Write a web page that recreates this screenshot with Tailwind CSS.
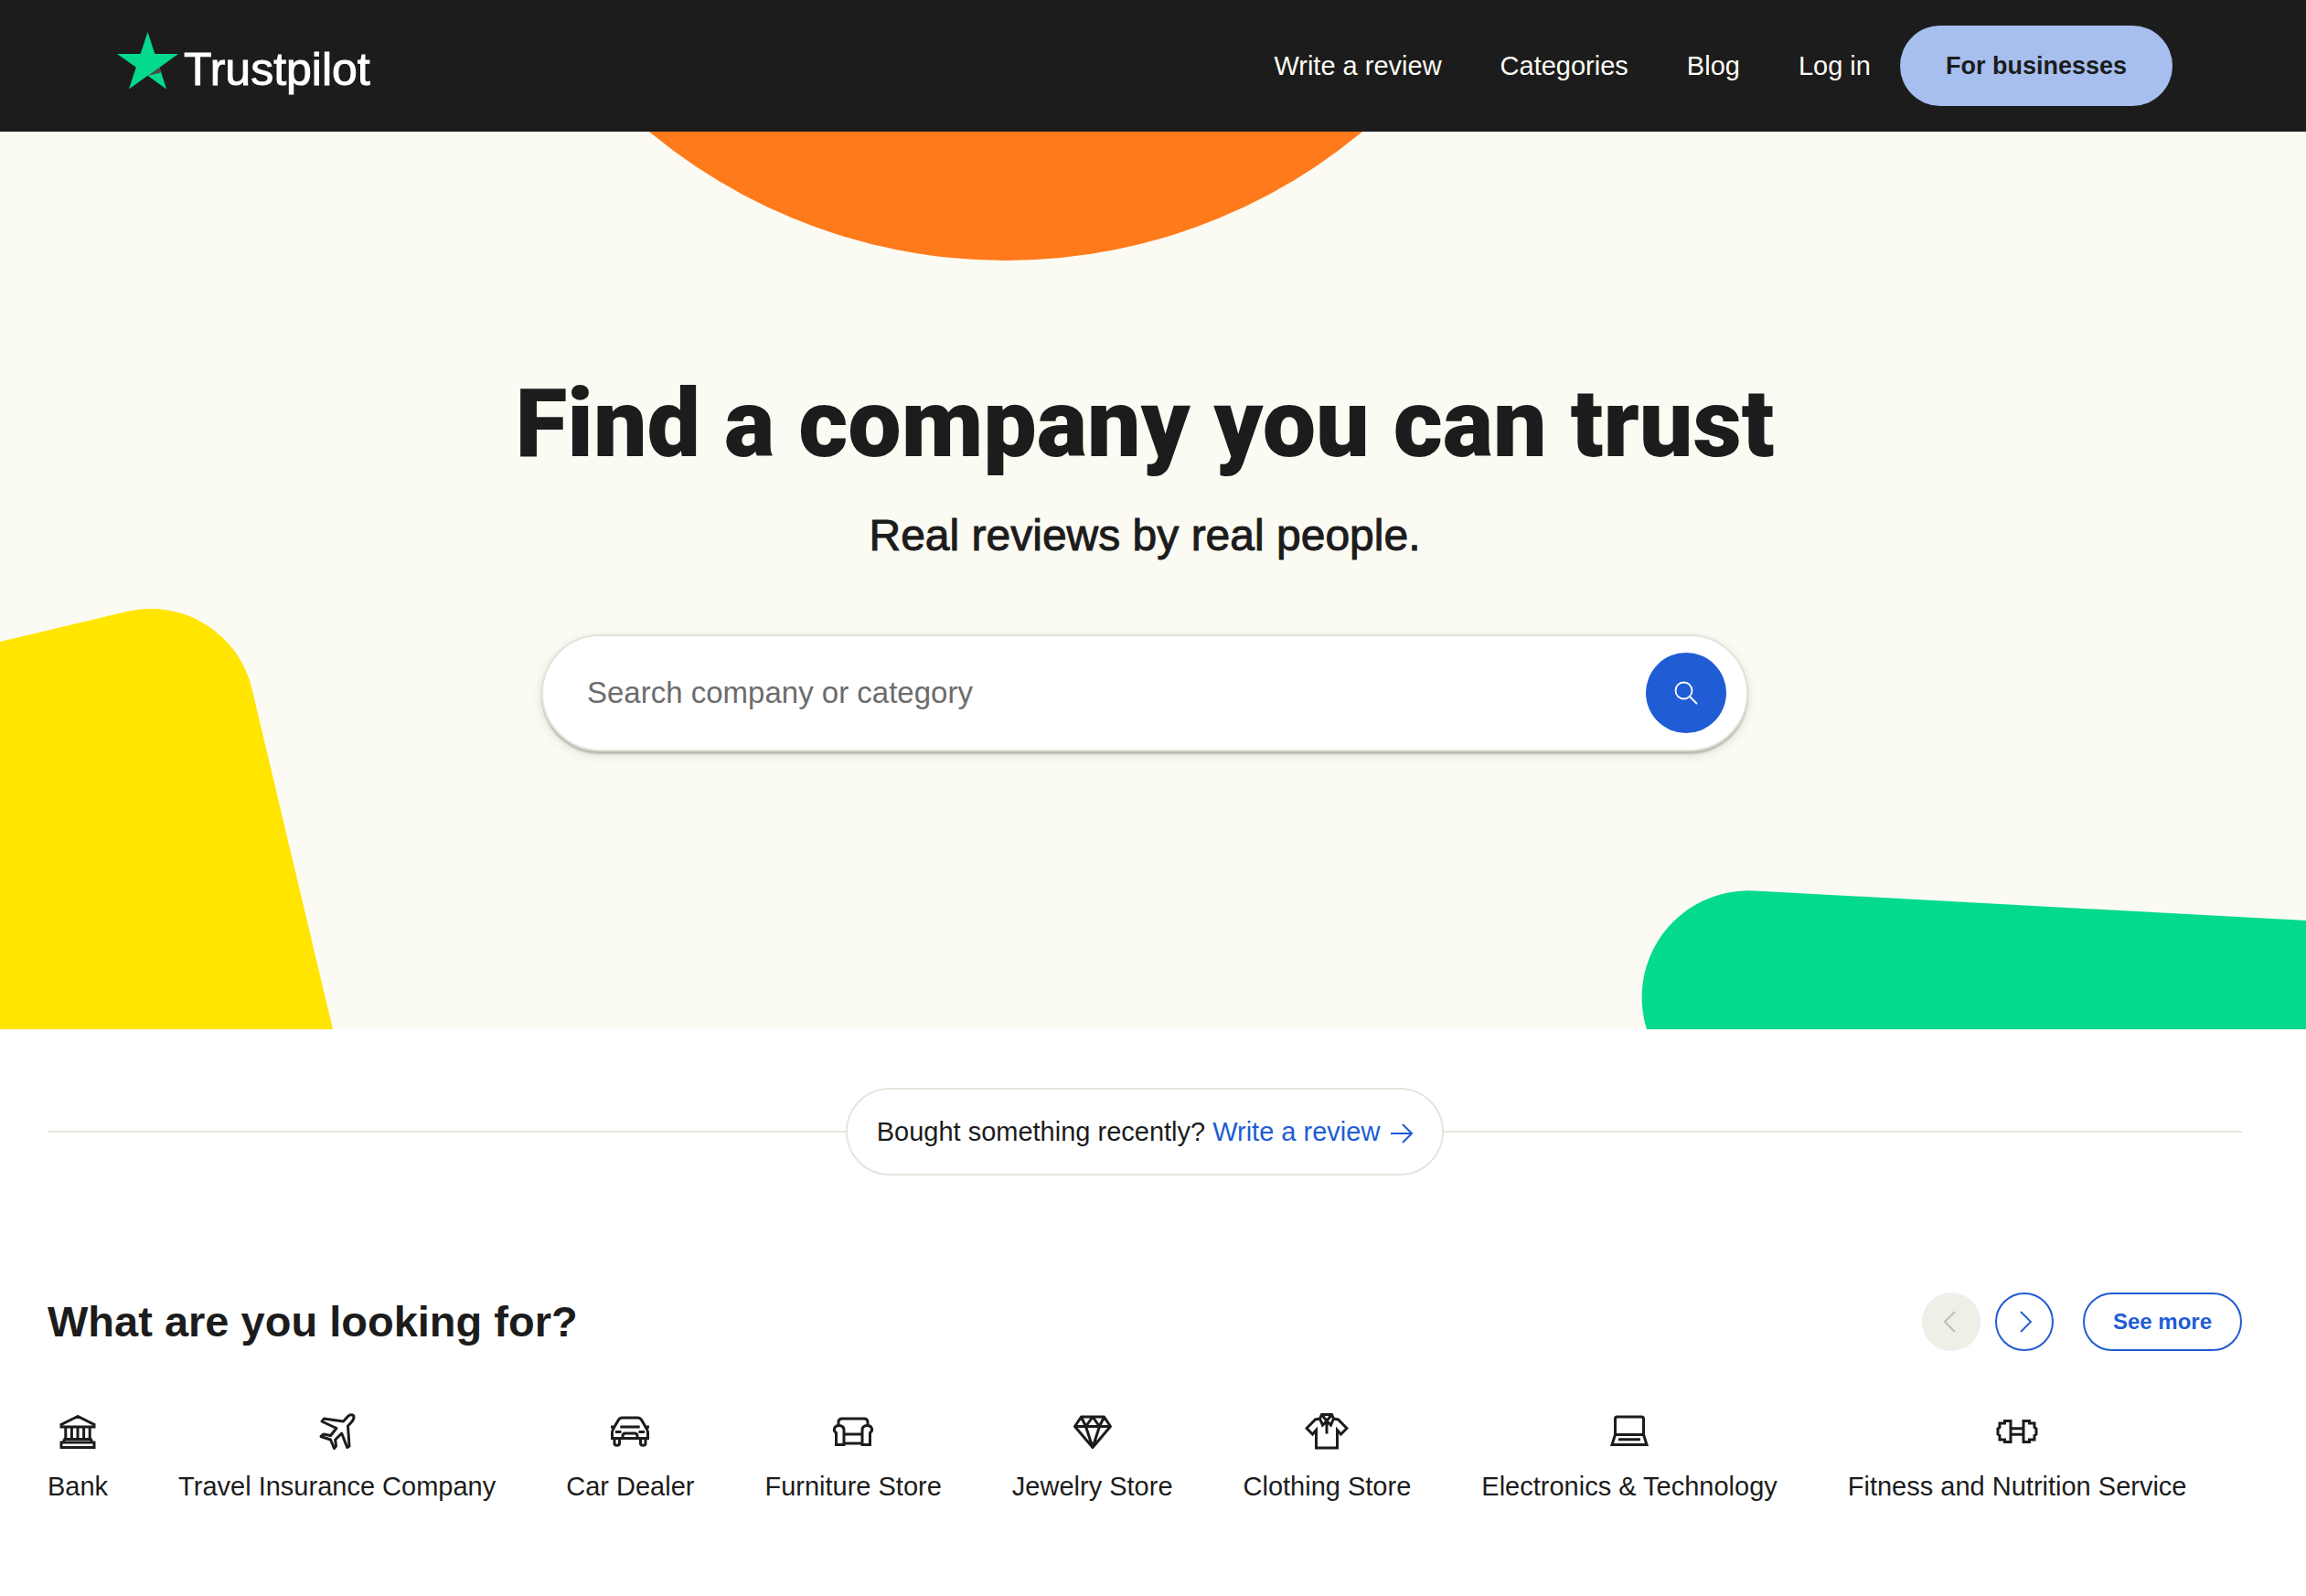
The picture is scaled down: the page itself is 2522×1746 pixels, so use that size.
<!DOCTYPE html>
<html lang="en">
<head>
<meta charset="utf-8">
<meta name="viewport" content="width=device-width, initial-scale=1">
<title>Trustpilot</title>
<script src="https://cdn.jsdelivr.net/npm/@tailwindcss/browser@4"></script>
</head>
<body class="min-h-screen overflow-x-hidden bg-white font-['Liberation_Sans',Arial,sans-serif] text-[#1c1c1c]">

<header class="flex h-36 items-center justify-between bg-[#1c1c1c] pl-32 pr-[146px] text-[#fcfbf3]">
  <a href="#" class="flex items-center gap-[6px] text-white">
    <svg class="mb-3 h-[63px] w-[67px]" viewBox="0 0 67 63" aria-hidden="true">
      <path fill="#04da8d" d="M33.500 0 41.400 24H67L46.500 38.800 54 62.500 33.500 47.800 13 62.500 20.800 38.600 0 24h25.600z"/>
      <path fill="#4a4a4a" d="M46.500 38.800 48.600 44.300 33.800 47.800z"/>
    </svg>
    <span class="pt-2 text-[50px] leading-[56px] [-webkit-text-stroke:1px_currentColor]">Trustpilot</span>
  </a>
  <nav class="flex items-center gap-8">
    <ul class="flex items-center gap-16 text-[29px] leading-10">
      <li><a href="#">Write a review</a></li>
      <li><a href="#">Categories</a></li>
      <li><a href="#">Blog</a></li>
      <li><a href="#">Log in</a></li>
    </ul>
    <a href="#" class="flex h-22 items-center rounded-full bg-[#a6bfef] px-[50px] text-[27px] font-bold text-[#1c1c1c]">For businesses</a>
  </nav>
</header>

<main>
  <section class="relative overflow-hidden bg-[#fcfbf3] pt-[260px] pr-[18px] pb-[304px]">
    <!-- decorative shapes -->
    <div class="absolute top-[-1079px] left-[calc(50%-771px)] size-[1220px] rounded-full bg-[#ff7a1a]"></div>
    <svg class="absolute bottom-0 left-0 h-[460px] w-[364px]" viewBox="0 0 364 460" aria-hidden="true">
      <path fill="#ffe500" d="M0 36 138.800 3A113.600 113.600 0 0 1 275.500 87.400L364 460H0z"/>
    </svg>
    <svg class="absolute right-0 bottom-0 h-[152px] w-[728px]" viewBox="0 0 728 152" aria-hidden="true">
      <path fill="#04da8d" d="M7 152A116.700 116.700 0 0 1 124.300 .5L728 33V152z"/>
    </svg>

    <div class="relative flex flex-col items-center">
      <h1 class="text-center font-['Roboto',sans-serif] text-[104px] leading-[120px] font-black">Find a company you can trust</h1>
      <p class="mt-8 text-center text-[48px] leading-[60px] [-webkit-text-stroke:1px_currentColor]">Real reviews by real people.</p>
      <form role="search" class="mt-[78px] flex h-32 w-full max-w-[1320px] items-center rounded-full border-2 border-[#e3e3da] bg-white pr-[22px] pl-12 shadow-[0_3px_2px_rgba(28,28,28,0.22),0_4px_12px_rgba(28,28,28,0.12)]">
        <input type="search" aria-label="Search company or category" placeholder="Search company or category" class="h-full min-w-0 flex-1 bg-transparent text-[33px] placeholder:text-[#6c6c6c] focus:outline-none">
        <button type="button" aria-label="Search" class="flex size-22 items-center justify-center rounded-full bg-[#205cd4] text-white">
          <svg class="size-[26px]" viewBox="0 0 26 26" fill="none" stroke="currentColor" stroke-width="1.800" aria-hidden="true"><circle cx="10.500" cy="10.500" r="9"/><path d="m17 17 8 8"/></svg>
        </button>
      </form>
    </div>
  </section>

  <div class="pt-16 pr-[70px] pl-[52px]">
    <div class="flex items-center">
      <div class="h-[2px] flex-1 bg-[#e5e5dd]"></div>
      <p class="flex h-24 items-center gap-2 rounded-full border-2 border-[#e5e5dd] px-8 text-[29px] leading-10">
        Bought something recently?
        <a href="#" class="flex items-center gap-3 text-[#205cd4]">Write a review
          <svg class="mt-1 size-6" viewBox="0 0 24 24" fill="none" stroke="currentColor" stroke-width="2" aria-hidden="true"><path d="M0 12h23M13 2l10 10-10 10"/></svg>
        </a>
      </p>
      <div class="h-[2px] flex-1 bg-[#e5e5dd]"></div>
    </div>

    <section class="mt-32">
      <div class="flex items-center">
        <h2 class="flex-1 text-[47px] leading-[56px] font-bold">What are you looking for?</h2>
        <div class="flex items-center gap-4">
          <button type="button" disabled aria-label="Previous" class="flex size-16 items-center justify-center rounded-full bg-[#efeee7] text-[#bebdb6]">
            <svg class="size-6" viewBox="0 0 24 24" fill="none" stroke="currentColor" stroke-width="2" aria-hidden="true"><path d="M16 1 5 12l11 11"/></svg>
          </button>
          <button type="button" aria-label="Next" class="flex size-16 items-center justify-center rounded-full border-2 border-[#205cd4] text-[#205cd4]">
            <svg class="size-6" viewBox="0 0 24 24" fill="none" stroke="currentColor" stroke-width="1.800" aria-hidden="true"><path d="m8 1 11 11L8 23"/></svg>
          </button>
          <a href="#" class="ml-4 flex h-16 items-center rounded-full border-2 border-[#205cd4] px-[31px] text-[24px] font-bold text-[#205cd4]">See more</a>
        </div>
      </div>

      <ul class="mt-16 flex gap-[77px] text-[29px] leading-10 whitespace-nowrap">
        <li><a href="#" class="flex flex-col items-center gap-4">
          <svg class="size-12" viewBox="0 0 48 48" fill="none" stroke="currentColor" stroke-width="3" aria-hidden="true"><path d="M24 7.500 6 16.500V19h36v-2.500zM10.800 19v14M17.400 19v14M24 19v14M30.600 19v14M37.200 19v14M8.500 32.500h31M9 32.500V36H6v5.500h36V36h-3v-3.500M9 36h30"/></svg>
          Bank</a></li>
        <li><a href="#" class="flex flex-col items-center gap-4">
          <svg class="size-12" viewBox="0 0 48 48" fill="none" stroke="currentColor" stroke-width="3" stroke-linejoin="round" aria-hidden="true"><path d="M41.500 6.500c-2-1.200-4.500-.5-6 1l-5 5.500L9.500 10 7 13l16 7.500-6.500 8L9 27l-3 2.500L16.500 33l4 9.500 2-2.500-.8-7 7-7 6 15.500L37 40l-1.500-22 5-5.500c1.500-2 2-4 1-6z"/></svg>
          Travel Insurance Company</a></li>
        <li><a href="#" class="flex flex-col items-center gap-4">
          <svg class="size-12" viewBox="0 0 48 48" fill="none" stroke="currentColor" stroke-width="3" aria-hidden="true"><path d="M4.500 31.500V25c0-3 1.500-4 2.500-6l4-7c1-2 2.500-3 4.500-3h17c2 0 3.500 1 4.500 3l4 7c1 2 2.500 3 2.500 6v6.500zM3 19h4.500M45 19h-4.500M13.300 19h21.400M8 24.500h6.500M40 24.500h-6.500M16 31.500V29c0-2 1-3 3-3h10c2 0 3 1 3 3v2.500M7 31.500V37c0 3 5.500 3 5.500 0v-5.500M41 31.500V37c0 3-5.500 3-5.500 0v-5.500"/></svg>
          Car Dealer</a></li>
        <li><a href="#" class="flex flex-col items-center gap-4">
          <svg class="size-12" viewBox="0 0 48 48" fill="none" stroke="currentColor" stroke-width="3" aria-hidden="true"><path d="M8 18v-4c0-2.500 1.500-4 4-4h24c2.500 0 4 1.500 4 4v4M5.500 38.500V25.500C1.500 23 3.500 17.500 8.500 17.500c3.500 0 5.500 2 5.500 5v16zM42.500 38.500V25.500C46.500 23 44.500 17.500 39.500 17.500c-3.500 0-5.500 2-5.500 5v16zM14 27h20M14 37h20"/></svg>
          Furniture Store</a></li>
        <li><a href="#" class="flex flex-col items-center gap-4">
          <svg class="size-12" viewBox="0 0 48 48" fill="none" stroke="currentColor" stroke-width="3" stroke-linejoin="round" aria-hidden="true"><path d="M11.500 8h25L43.500 18.500 24 41.500 4.500 18.500zM4.500 18.500h39M11.500 8l5 10.500L24 8l7.500 10.500 5-10.500M16.500 18.500 24 41.500l7.500-23"/></svg>
          Jewelry Store</a></li>
        <li><a href="#" class="flex flex-col items-center gap-4">
          <svg class="size-12" viewBox="0 0 48 48" fill="none" stroke="currentColor" stroke-width="3" aria-hidden="true"><path d="M18.500 5.500h11l2 4.500 5 1L46 20.500 39.500 27 35.500 22.500V42h-23V22.500L8.500 27 2 20.500 11.500 11l5-1zM16.500 10l3 7L24 12.500l4.500 4.500 3-7M18.500 5.500 24 12.500l5.500-7M24 12.500v14"/></svg>
          Clothing Store</a></li>
        <li><a href="#" class="flex flex-col items-center gap-4">
          <svg class="size-12" viewBox="0 0 48 48" fill="none" stroke="currentColor" stroke-width="3" aria-hidden="true"><path d="M8.500 27.500V10c0-1.300.7-2 2-2h27c1.300 0 2 .7 2 2v17.500zM8.500 27.500 5 38.500h38l-3.500-11M12 32.800h24"/></svg>
          Electronics &amp; Technology</a></li>
        <li><a href="#" class="flex flex-col items-center gap-4">
          <svg class="size-12" viewBox="0 0 48 48" fill="none" stroke="currentColor" stroke-width="3" aria-hidden="true"><path d="M17 12.500h-6.500V15H5v4.500L3 21v6l2 1.500V33h5.500v2.500H17zM31 12.500h6.500V15H43v4.500l2 1.500v6l-2 1.500V33h-5.500v2.500H31zM17 20.700h14M17 27.300h14"/></svg>
          Fitness and Nutrition Service</a></li>
      </ul>
    </section>
  </div>
</main>
</body>
</html>
